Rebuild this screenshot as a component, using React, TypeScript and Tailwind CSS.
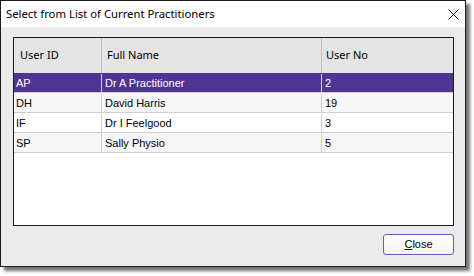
import React from "react";

const rows = [
  { id: "AP", name: "Dr A Practitioner", no: "2" },
  { id: "DH", name: "David Harris", no: "19" },
  { id: "IF", name: "Dr I Feelgood", no: "3" },
  { id: "SP", name: "Sally Physio", no: "5" },
];

const App: React.FC = () => {
  return (
    <div className="w-[474px] h-[276px] bg-white">
      <div className="w-[466px] h-[267px] border border-[#1c1c1c] bg-[#ebebeb] flex flex-col shadow-[4px_4px_3px_rgba(0,0,0,0.55)]">
        {/* title bar */}
        <div className="h-[26px] bg-white flex items-center justify-between pl-[5px] pr-[6px]">
          <span className="text-[11.3px] text-black font-['Noto_Sans',sans-serif] leading-none">
            Select from List of Current Practitioners
          </span>
          <svg width="11" height="11" viewBox="0 0 11 11">
            <path d="M0.5 0.5 L10.5 10.5 M10.5 0.5 L0.5 10.5" stroke="#111" strokeWidth="1" />
          </svg>
        </div>

        <div className="flex-1 flex flex-col pt-[10px] pl-[12px] pr-[11px]">
          {/* list view */}
          <div className="h-[189px] border border-[#1a1a1a] bg-white flex flex-col">
            <div className="h-[35px] flex bg-[#e4e4e4] text-[11px] text-black font-['Noto_Sans',sans-serif]">
              <div className="w-[88px] flex items-center pl-[6px] border-r border-[#bdbdbd]">User ID</div>
              <div className="w-[220px] flex items-center pl-[5px] border-r border-[#bdbdbd]">Full Name</div>
              <div className="flex-1 flex items-center pl-[4px]">User No</div>
            </div>
            {rows.map((r, i) => (
              <div
                key={r.id}
                className={
                  "h-[20px] flex text-[11px] font-['Liberation_Sans',sans-serif] border-b pt-[1px] " +
                  (i === 0
                    ? "bg-[#4f3494] text-white border-[#d0d0d0]"
                    : i % 2 === 1
                    ? "bg-[#f7f7f7] text-black border-[#d0d0d0]"
                    : "bg-white text-black border-[#d0d0d0]")
                }
              >
                <div className="w-[88px] flex items-center pl-[2px] border-r border-[#d0d0d0]">{r.id}</div>
                <div className="w-[220px] flex items-center pl-[3px] border-r border-[#d0d0d0]">{r.name}</div>
                <div className="flex-1 flex items-center pl-[3px]">{r.no}</div>
              </div>
            ))}
          </div>

          <div className="flex justify-end pt-[8px]">
            <button className="w-[71px] h-[21px] rounded-[3px] border border-[#6b5cb5] bg-gradient-to-b from-white to-[#f4f4f4] text-[11px] text-black font-['Liberation_Sans',sans-serif] flex items-center justify-center">
              <span>
                <span className="underline">C</span>lose
              </span>
            </button>
          </div>
        </div>
      </div>
    </div>
  );
};

export default App;
